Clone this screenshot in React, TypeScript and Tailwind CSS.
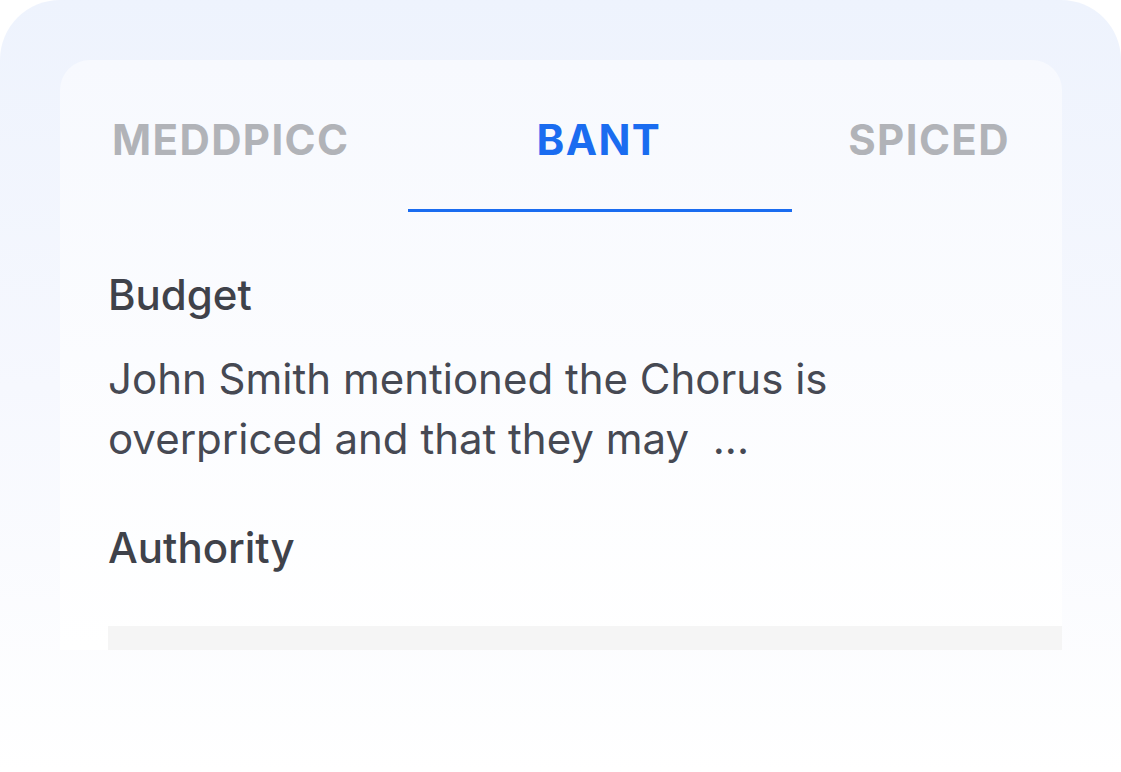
import React from "react";

export default function App() {
  return (
    <div
      className="w-[1121px] h-[772px] bg-white overflow-hidden"
      style={{ fontFamily: "Inter, 'Noto Sans', sans-serif" }}
    >
      <div className="w-[1121px] h-[772px] rounded-t-[60px] bg-gradient-to-b from-[#eef3fd] via-[#f6f8fe] to-white pt-[60px] px-[60px]">
        <div className="relative w-[1002px] h-[590px] rounded-t-[30px] bg-gradient-to-b from-[#f7f9fe] to-white overflow-hidden">
          <div className="relative flex justify-between items-center h-[152px] pl-[52px] pr-[52px] pt-[6px]">
            <span className="text-[42px] font-bold tracking-[0.033em] text-[#b1b3b8]">MEDDPICC</span>
            <span className="text-[42px] font-bold tracking-[0.033em] text-[#1a6cf0]">BANT</span>
            <span className="text-[42px] font-bold tracking-[0.033em] text-[#b1b3b8]">SPICED</span>
            <div className="absolute left-[348px] top-[149px] w-[384px] h-[3px] bg-[#1a6cf0]" />
          </div>
          <div className="pl-[48px] pr-[48px] text-[#3f424a]">
            <div className="mt-[61px] text-[42px] font-medium leading-[44px]">Budget</div>
            <div className="mt-[32px] text-[42px] leading-[60px] text-[#464953] w-[800px]">
              John Smith mentioned the Chorus is
              <br />
              overpriced and that they may&nbsp; ...
            </div>
            <div className="mt-[57px] text-[42px] font-medium leading-[44px]">Authority</div>
            <div className="mt-[56px] h-[24px] w-[954px] bg-[#f5f5f5]" />
          </div>
        </div>
      </div>
    </div>
  );
}
